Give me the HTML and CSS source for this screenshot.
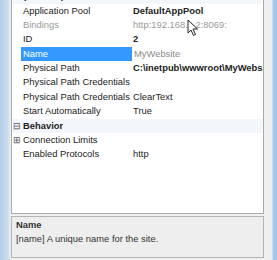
FILE: index.html
```html
<!DOCTYPE html>
<html lang="en">

<head>
    <meta charset="utf-8">
    <title>Advanced Settings</title>
    <link rel="stylesheet" href="styles.css">
</head>

<body>
    <div class="frame">
        <div class="edge-left"></div>

        <div class="main">
            <div class="grid">
                <div class="rows">
                    <div class="row kategori"><span class="margin">&#8863;</span><span class="navn">(General)</span></div>
                    <div class="row"><span class="margin"></span><span class="navn">Application Pool</span><span class="vaerdi fed">DefaultAppPool</span></div>
                    <div class="row graa"><span class="margin"></span><span class="navn">Bindings</span><span class="vaerdi">http:192.168.1.2:8069:</span></div>
                    <div class="row"><span class="margin"></span><span class="navn">ID</span><span class="vaerdi fed">2</span></div>
                    <div class="row valgt"><span class="margin"></span><span class="navn">Name</span><span class="vaerdi">MyWebsite</span></div>
                    <div class="row"><span class="margin"></span><span class="navn">Physical Path</span><span class="vaerdi fed">C:\inetpub\wwwroot\MyWebsite</span></div>
                    <div class="row"><span class="margin"></span><span class="navn">Physical Path Credentials</span><span class="vaerdi"></span></div>
                    <div class="row"><span class="margin"></span><span class="navn">Physical Path Credentials Logon Type</span><span class="vaerdi">ClearText</span></div>
                    <div class="row"><span class="margin"></span><span class="navn">Start Automatically</span><span class="vaerdi">True</span></div>
                    <div class="row kategori"><span class="margin boks">&#8863;</span><span class="navn">Behavior</span></div>
                    <div class="row"><span class="margin boks">&#8862;</span><span class="navn">Connection Limits</span><span class="vaerdi"></span></div>
                    <div class="row"><span class="margin"></span><span class="navn">Enabled Protocols</span><span class="vaerdi">http</span></div>
                </div>

                <svg class="cursor" width="12" height="18" viewBox="0 0 12 18">
                    <path d="M1 1 L1 14 L4 11 L6.5 16.5 L8.5 15.5 L6 10 L10.5 10 Z" fill="#fff" stroke="#222" stroke-width="1"/>
                </svg>
            </div>

            <div class="beskrivelse">
                <div class="titel">Name</div>
                <div class="tekst">[name] A unique name for the site.</div>
            </div>
        </div>

        <div class="edge-right"></div>
    </div>
</body>

</html>
```

FILE: styles.css
```css
body {
    margin: 0;
    width: 277px;
    height: 260px;
    overflow: hidden;
    font-family: 'Liberation Sans', Arial, sans-serif;
    font-size: 9.4px;
}

.frame {
    display: flex;
    height: 260px;
}

.edge-left {
    flex: none;
    width: 10px;
    background: linear-gradient(to right, #b5cde6, #c9dbee 70%, #dfe7ef);
}

.edge-right {
    flex: none;
    width: 13px;
    background: linear-gradient(to right, #f0f0f0 0px, #eeeeee 8px, #a7cbee 9px, #9cc3ea 13px);
}

.main {
    flex: 1;
    min-width: 0;
    display: flex;
    flex-direction: column;
    gap: 2px;
    padding: 0 0 2px 1px;
    background-color: #f0f0f0;
}

.grid {
    position: relative;
    height: 213px;
    overflow: hidden;
    background-color: white;
    border: 1px solid #a9a9a9;
    border-top: none;
}

.rows {
    margin-top: -10.9px;
}

.row {
    display: flex;
    height: 14.4px;
    line-height: 14.4px;
    color: #222;
    white-space: nowrap;
}

.margin {
    width: 9px;
    flex: none;
    font-size: 9px;
    color: #555;
    text-align: center;
}

.navn {
    width: 110px;
    flex: none;
    padding-left: 2px;
    box-sizing: border-box;
    overflow: hidden;
}

.vaerdi {
    flex: 1;
    min-width: 0;
    padding-left: 2px;
    overflow: hidden;
}

.fed {
    font-weight: 700;
}

.graa {
    color: #9a9a9a;
}

.kategori {
    background-color: #f3f6fa;
}

.kategori .navn {
    font-weight: 700;
    width: auto;
}

.valgt .navn {
    background-color: #3399ff;
    color: white;
}

.valgt .vaerdi {
    color: #8a8a8a;
    border-left: 1px solid #3399ff;
}

.cursor {
    position: absolute;
    left: 175px;
    top: 19px;
}

.beskrivelse {
    flex: 1;
    border: 1px solid #b4b4b4;
    background-color: #eeeeee;
    padding: 1px 0 0 4px;
    color: #333;
}

.titel {
    font-weight: 700;
    line-height: 14px;
}

.tekst {
    line-height: 14px;
}
```
